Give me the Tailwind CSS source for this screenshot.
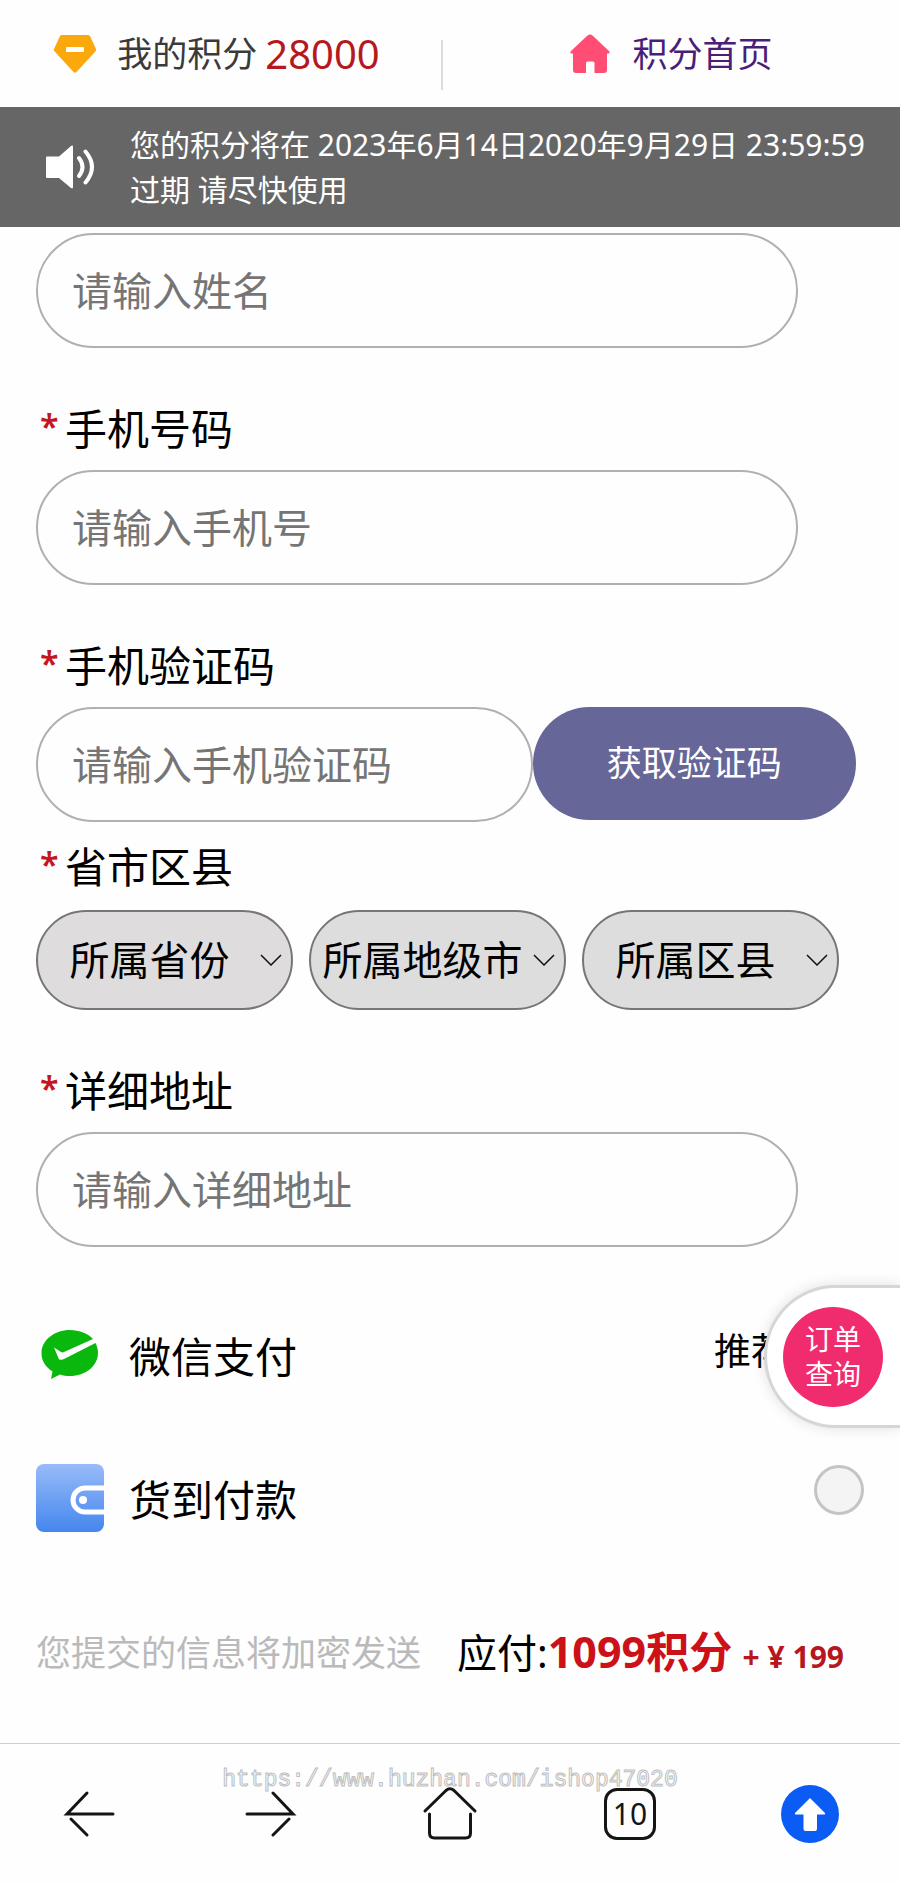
<!DOCTYPE html>
<html lang="zh-Hans">
<head>
  <meta charset="UTF-8" />
  <meta name="viewport" content="width=device-width, initial-scale=1.0" />
  <title>积分兑换 | 填写收货信息</title>
  <script src="https://cdn.jsdelivr.net/npm/@tailwindcss/browser@4"></script>
  <style>
    body {
      font-family: 'Noto Sans', 'Noto Sans CJK SC', sans-serif;
    }
  </style>
</head>
<body class="bg-[#fefefe] text-black min-h-screen">

  <!-- 顶部积分 -->
  <header class="flex items-center h-[107px] text-[35px] leading-[48px]">
    <div class="w-[49%] pr-2 flex items-center justify-center gap-5 text-[#3a3a3a]">
      <svg class="w-11 h-10" viewBox="0 0 44 40" fill="none" aria-hidden="true">
        <path d="M9 1h26q1 0 2 1l6 13q.6 1-.2 2L23.500 38q-1.500 1.600-3 0L1.200 17q-.8-1-.2-2L7 2q.8-1 2-1z" fill="#fba80d" />
        <rect x="13" y="13" width="18" height="5" rx="1" fill="#fff" />
      </svg>
      <p class="flex items-center gap-2">我的积分 <span class="text-[40px] text-[#b5191d]">28000</span></p>
    </div>
    <div class="w-[2px] h-[50px] mt-[22px] bg-[#dcdcdc]"></div>
    <a href="#" class="flex-1 flex items-center justify-center gap-[22px] text-[#4a1d78]">
      <svg class="w-10 h-10" viewBox="0 0 40 40" fill="none" aria-hidden="true">
        <path d="M17.500 1.500q2.500-2 5 0L39 17q1.500 2-.5 2.500H37V36q0 3-3 3H24.500V29q0-1.500-1.500-1.500h-5.500q-1.500 0-1.500 1.500v10H6q-3 0-3-3V19.500H1.500Q-.5 19 1 17z" fill="#ff4d74" />
      </svg>
      积分首页
    </a>
  </header>

  <!-- 到期提醒 -->
  <div class="flex items-center h-[120px] pl-[46px] bg-[#666] text-white">
    <svg class="w-[50px] h-11 mr-[34px] shrink-0" viewBox="0 0 50 44" fill="none" aria-hidden="true">
      <path d="M1 11.500h12L25 1q2-1.200 2 1v40q0 2.200-2 1L13 33H1q-1 0-1-1V12.500q0-1 1-1z" fill="#fff" />
      <path d="M33 13q7 9 0 18M39.500 6.500q13 15.500 0 31" stroke="#fff" stroke-width="4" stroke-linecap="round" />
    </svg>
    <p class="text-[30px] leading-[45px]">您的积分将在 2023年6月14日2020年9月29日 23:59:59<br>过期 请尽快使用</p>
  </div>

  <main>
    <form class="px-9 pt-[6px]">
      <input type="text" aria-label="姓名" placeholder="请输入姓名" class="block w-[92%] h-[115px] px-[34px] rounded-full border-2 border-[#b0b0b0] text-[40px] placeholder:text-[#757575]" />

      <label for="phone" class="flex items-center h-16 mt-[48px] mb-[10px] pl-1 text-[42px]"><span class="w-[25px] pb-1 text-[34px] font-semibold text-[#c4161c]">*</span>手机号码</label>
      <input id="phone" type="tel" placeholder="请输入手机号" class="block w-[92%] h-[115px] px-[34px] rounded-full border-2 border-[#b0b0b0] text-[40px] placeholder:text-[#757575]" />

      <label for="code" class="flex items-center h-16 mt-[48px] mb-[10px] pl-1 text-[42px]"><span class="w-[25px] pb-1 text-[34px] font-semibold text-[#c4161c]">*</span>手机验证码</label>
      <div class="flex items-start">
        <input id="code" type="text" placeholder="请输入手机验证码" class="w-[60%] h-[115px] px-[34px] rounded-full border-2 border-[#b0b0b0] text-[40px] placeholder:text-[#757575]" />
        <button type="button" class="w-[39%] h-[113px] rounded-full bg-[#666699] text-white text-[35px]">获取验证码</button>
      </div>

      <label for="province" class="flex items-center h-16 mt-[12px] mb-[12px] pl-1 text-[42px]"><span class="w-[25px] pb-1 text-[34px] font-semibold text-[#c4161c]">*</span>省市区县</label>
      <div class="grid grid-cols-3 gap-4 mr-[25px]">
        <div class="relative">
          <select id="province" class="appearance-none w-full h-[100px] pr-[30px] rounded-full border-2 border-[#767676] bg-[#dfdcdd] text-[40px] text-center">
            <option>所属省份</option>
          </select>
          <svg class="absolute right-[11px] top-[44px] w-[22px] h-3 pointer-events-none" viewBox="0 0 22 12" fill="none" stroke="#111" stroke-width="1.500"><path d="M1 1l10 10L21 1" /></svg>
        </div>
        <div class="relative">
          <select aria-label="所属地级市" class="appearance-none w-full h-[100px] pr-[30px] rounded-full border-2 border-[#767676] bg-[#dddddd] text-[40px] text-center">
            <option>所属地级市</option>
          </select>
          <svg class="absolute right-[11px] top-[44px] w-[22px] h-3 pointer-events-none" viewBox="0 0 22 12" fill="none" stroke="#111" stroke-width="1.500"><path d="M1 1l10 10L21 1" /></svg>
        </div>
        <div class="relative">
          <select aria-label="所属区县" class="appearance-none w-full h-[100px] pr-[30px] rounded-full border-2 border-[#767676] bg-[#dddddd] text-[40px] text-center">
            <option>所属区县</option>
          </select>
          <svg class="absolute right-[11px] top-[44px] w-[22px] h-3 pointer-events-none" viewBox="0 0 22 12" fill="none" stroke="#111" stroke-width="1.500"><path d="M1 1l10 10L21 1" /></svg>
        </div>
      </div>

      <label for="address" class="flex items-center h-16 mt-[48px] mb-[10px] pl-1 text-[42px]"><span class="w-[25px] pb-1 text-[34px] font-semibold text-[#c4161c]">*</span>详细地址</label>
      <input id="address" type="text" placeholder="请输入详细地址" class="block w-[92%] h-[115px] px-[34px] rounded-full border-2 border-[#b0b0b0] text-[40px] placeholder:text-[#757575]" />
    </form>

    <!-- 支付方式 -->
    <section class="mt-[38px]">
      <div class="relative flex items-center h-[143px] px-9">
        <svg class="w-[68px] h-[68px] mr-[25px] mb-[4px]" viewBox="0 0 68 68" fill="none" aria-hidden="true">
          <path d="M34 9C18.500 9 5.500 19 5.500 32c0 8 4 14 11 18.500L15 58l9-4.500c3 1 6.500 1.500 10 1.500 15.500 0 28-10 28-23 0-4-1-7-2.500-10L29 37.500q-3.500 2-5.500 1-1-.5-1.500-2.500l-4-9.500 7 4.500q1.500.8 3 0L57 18C52 12.500 43.500 9 34 9z" fill="#0ab80d" />
        </svg>
        <label for="wechat" class="text-[42px]">微信支付</label>
        <span class="ml-auto mr-[26px] pb-3 text-[37px]">推荐</span>
        <input id="wechat" type="radio" name="pay" class="appearance-none size-[50px] mb-5 rounded-full border-[3px] border-[#c4c4c4] bg-[#f4f4f4]" />

        <!-- 悬浮订单查询 -->
        <a href="#" class="absolute right-0 inset-y-0 w-[136px] flex items-center pl-4 rounded-l-full border-3 border-r-0 border-[#d6d6d6] bg-white shadow-[0_0_14px_rgba(0,0,0,0.12)]">
          <span class="size-[100px] flex items-center justify-center rounded-full bg-[#f12c6e] text-white text-[28px] leading-[35px] text-center">订单<br>查询</span>
        </a>
      </div>
      <div class="flex items-center h-[143px] px-9">
        <svg class="w-[68px] h-[68px] mr-[25px] mb-[4px]" viewBox="0 0 68 68" fill="none" aria-hidden="true">
          <defs>
            <linearGradient id="wallet" x1="0" y1="0" x2="0" y2="1">
              <stop offset="0" stop-color="#98bbf8" />
              <stop offset="1" stop-color="#4586ee" />
            </linearGradient>
          </defs>
          <rect width="68" height="68" rx="8" fill="url(#wallet)" />
          <path d="M68 24H49a12 12 0 0 0 0 24h19" stroke="#fff" stroke-width="5" />
          <circle cx="47" cy="36" r="4" fill="#fff" />
        </svg>
        <label for="cod" class="text-[42px]">货到付款</label>
        <input id="cod" type="radio" name="pay" class="appearance-none size-[50px] mb-5 ml-auto rounded-full border-[3px] border-[#c4c4c4] bg-[#f4f4f4]" />
      </div>
    </section>

    <!-- 应付金额 -->
    <div class="flex items-center h-[172px] pb-2 pl-9 whitespace-nowrap">
      <p class="text-[35px] text-[#bababa]">您提交的信息将加密发送</p>
      <p class="ml-9 text-[40px]">应付:<strong class="text-[43px] leading-[56px] text-[#cc1119]">1099积分</strong> <strong class="text-[30px] text-[#b8161d]">+ ¥ 199</strong></p>
    </div>
  </main>

  <!-- 底部导航 -->
  <nav class="relative grid grid-cols-5 items-center justify-items-center h-[140px] border-t border-[#cfcfcf]">
    <p class="absolute top-[22px] inset-x-0 text-center font-['Liberation_Mono',monospace] text-[23px] leading-7 text-white [-webkit-text-stroke:1px_#bdbdbd]">https://www.huzhan.com/ishop47020</p>
    <button type="button" aria-label="后退" class="relative">
      <svg class="w-[54px] h-[54px]" viewBox="0 0 54 54" fill="none" stroke="#151515" stroke-width="3" stroke-linecap="round"><path d="M50 27H4L24 6M8 32l16 16" /></svg>
    </button>
    <button type="button" aria-label="前进" class="relative">
      <svg class="w-[54px] h-[54px]" viewBox="0 0 54 54" fill="none" stroke="#151515" stroke-width="3" stroke-linecap="round"><path d="M4 27h46L30 6M46 32L30 48" /></svg>
    </button>
    <button type="button" aria-label="主页" class="relative">
      <svg class="w-[58px] h-[58px]" viewBox="0 0 58 58" fill="none" stroke="#151515" stroke-width="3" stroke-linecap="round" stroke-linejoin="round"><path d="M4 26L25 5.500q4-3.500 8 0L54 26M8.500 29v19q0 5 5 5h31q5 0 5-5V29" /></svg>
    </button>
    <button type="button" aria-label="标签页" class="relative size-[52px] rounded-[13px] border-3 border-[#151515] text-[30px] leading-[44px] text-[#151515]">10</button>
    <button type="button" aria-label="回到顶部" class="relative">
      <svg class="w-[58px] h-[58px]" viewBox="0 0 58 58" fill="none"><circle cx="29" cy="29" r="29" fill="#0a5cf5" /><path d="M29 13l15 15q.8 1.500-1 1.500h-7V44q0 2-2 2H24.500q-2 0-2-2V29.500H15q-1.800 0-1-1.500z" fill="#fff" /></svg>
    </button>
  </nav>

</body>
</html>
